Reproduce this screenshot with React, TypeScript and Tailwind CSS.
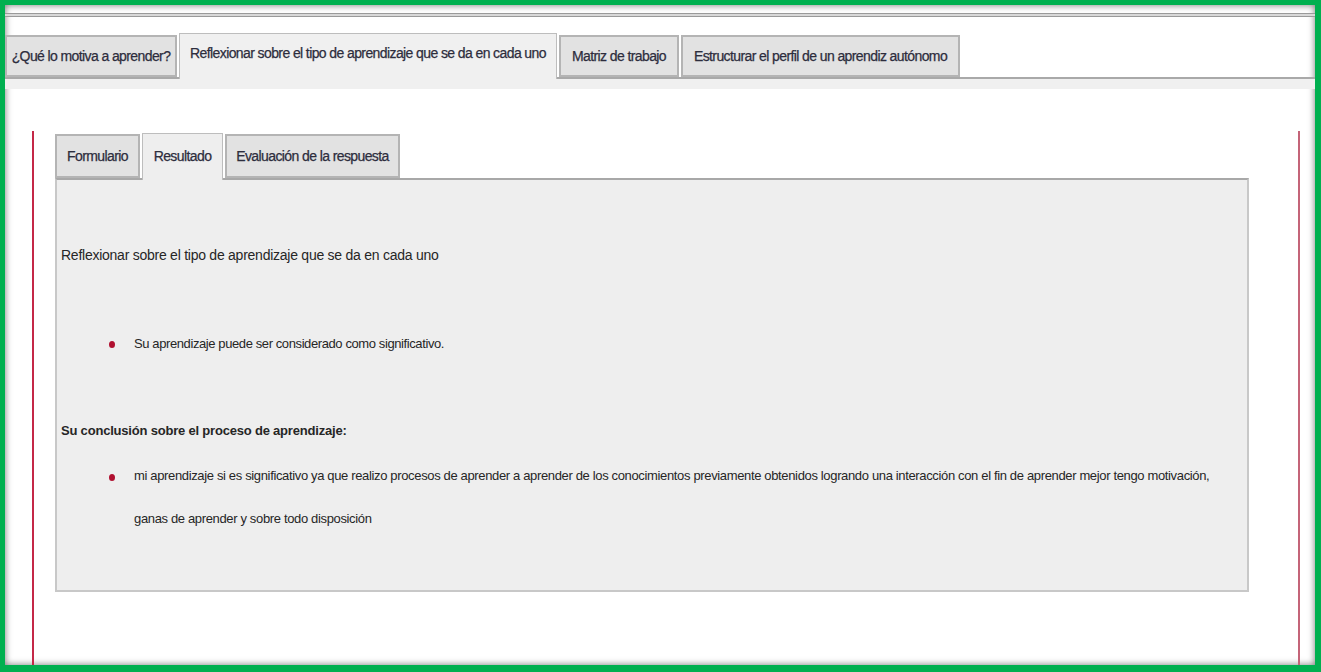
import React from 'react'

const font = { fontFamily: '"Liberation Sans", Arial, sans-serif' }

const topTabs = [
    { label: '¿Qué lo motiva a aprender?', active: false, w: 'w-[172px]' },
    { label: 'Reflexionar sobre el tipo de aprendizaje que se da en cada uno', active: true, w: 'w-[378px]' },
    { label: 'Matriz de trabajo', active: false, w: 'w-[120px]' },
    { label: 'Estructurar el perfil de un aprendiz autónomo', active: false, w: 'w-[279px]' },
]

const innerTabs = [
    { label: 'Formulario', active: false, w: 'w-[85px]' },
    { label: 'Resultado', active: true, w: 'w-[81px]' },
    { label: 'Evaluación de la respuesta', active: false, w: 'w-[175px]' },
]

function Bullet() {
    return <span className="mt-[7px] h-[7px] w-[6px] shrink-0 rounded-[50%] bg-[#b01030]" />
}

export default function App() {
    return (
        <div className="h-[672px] w-[1321px] overflow-hidden bg-[#00b050] pb-[7px] pl-[5px] pr-[6px] pt-[5px]" style={font}>
            <div className="relative flex h-full flex-col overflow-hidden bg-white shadow-[inset_0_0_7px_rgba(0,0,0,0.55)]">
                {/* top rule */}
                <div className="mt-[8px] h-[4px] border-y border-[#9a9a9a] bg-[#d8d8d8]" />

                {/* main tabs */}
                <div className="mt-[16px] flex items-end border-b-2 border-[#a9a9a9] pr-[6px]">
                    {topTabs.map((t) => (
                        <div
                            key={t.label}
                            className={
                                t.active
                                    ? `${t.w} mr-[2px] -mb-[2px] flex h-[46px] items-center justify-center whitespace-nowrap border border-b-0 border-[#bdbdbd] bg-[#f0f0f0] pb-[6px] text-[14px] tracking-[-0.6px] text-[#2d2d3d] [-webkit-text-stroke:0.25px_#2d2d3d]`
                                    : `${t.w} mr-[2px] flex h-[42px] items-center justify-center overflow-hidden whitespace-nowrap border-2 border-[#b4b4b4] bg-[#e2e2e2] text-[14px] tracking-[-0.6px] text-[#2d2d3d] [-webkit-text-stroke:0.25px_#2d2d3d]`
                            }
                        >
                            {t.label}
                        </div>
                    ))}
                </div>
                <div className="h-[10px] bg-[#f0f0f0]" />

                {/* content frame with red rules */}
                <div className="ml-[27px] mr-[15px] mt-[42px] flex-1 border-l-2 border-r-2 border-l-[#c42847] border-r-[#c46478] pl-[21px] pr-[49px]">
                    <div className="mt-[2px] flex items-end">
                        {innerTabs.map((t) => (
                            <div
                                key={t.label}
                                className={
                                    t.active
                                        ? `${t.w} mr-[2px] -mb-[2px] flex h-[47px] items-center justify-center whitespace-nowrap border border-b-0 border-[#bdbdbd] bg-[#eeeeee] pb-[2px] text-[14px] tracking-[-0.6px] text-[#2d2d3d] [-webkit-text-stroke:0.25px_#2d2d3d]`
                                        : `${t.w} mr-[2px] flex h-[44px] items-center justify-center whitespace-nowrap border-2 border-[#b4b4b4] bg-[#e2e2e2] text-[14px] tracking-[-0.6px] text-[#2d2d3d] [-webkit-text-stroke:0.25px_#2d2d3d]`
                                }
                            >
                                {t.label}
                            </div>
                        ))}
                    </div>
                    <div className="h-[414px] border-2 border-[#c8c8c8] border-t-[#a8a8a8] bg-[#eeeeee] pl-[4px] text-[#262626]">
                        <p className="mt-[65px] text-[14px] leading-[20px] tracking-[-0.25px]">
                            Reflexionar sobre el tipo de aprendizaje que se da en cada uno
                        </p>
                        <div className="mt-[69px] flex gap-[19px] pl-[48px] text-[13px] leading-[20px] tracking-[-0.4px]">
                            <Bullet />
                            <span>Su aprendizaje puede ser considerado como significativo.</span>
                        </div>
                        <p className="mt-[67px] text-[13px] font-bold leading-[20px] tracking-[-0.2px]">
                            Su conclusión sobre el proceso de aprendizaje:
                        </p>
                        <div className="mt-[26px] flex gap-[19px] pl-[48px] text-[13px] leading-[43px] tracking-[-0.35px]">
                            <Bullet />
                            <span className="-mt-[13px] whitespace-nowrap">
                                mi aprendizaje si es significativo ya que realizo procesos de aprender a aprender de los conocimientos previamente obtenidos logrando una interacción con el fin de aprender mejor tengo motivación,
                                <br />
                                ganas de aprender y sobre todo disposición
                            </span>
                        </div>
                    </div>
                </div>
            </div>
        </div>
    )
}
